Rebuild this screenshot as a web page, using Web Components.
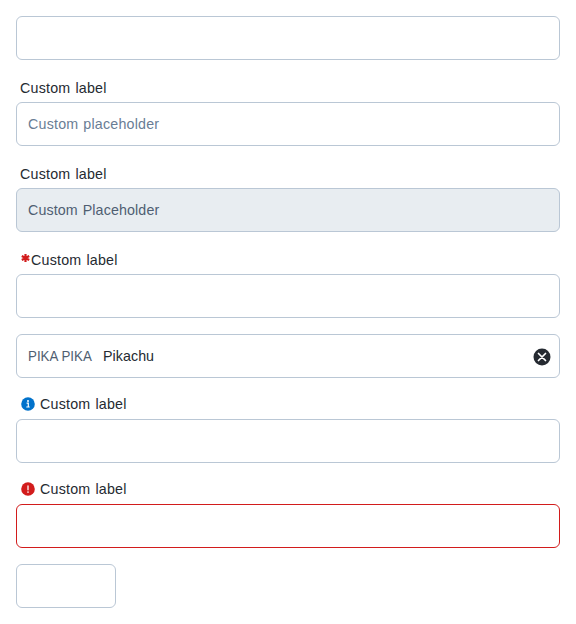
<!DOCTYPE html>
<html lang="en">
<head>
<meta charset="utf-8">
<title>Input fields</title>
<style>
body { margin: 0; padding: 16px; background: #fff; }
</style>
</head>
<body>
<field-list></field-list>
<script>
const ICONS = {
  info: `<svg viewBox="0 0 14 14" width="14" height="14"><circle cx="7" cy="7" r="6.8" fill="#0172cb"/><circle cx="7" cy="4.1" r="1" fill="#fff"/><path d="M5.6 6.2h1.7v3.7M5.3 10h3.4" fill="none" stroke="#fff" stroke-width="1.2"/></svg>`,
  error: `<svg viewBox="0 0 14 14" width="14" height="14"><circle cx="7" cy="7" r="6.8" fill="#d21c1c"/><path d="M7 4v3.8" stroke="#fff" stroke-opacity=".85" stroke-width="1.5" stroke-linecap="round"/><circle cx="7" cy="10.1" r=".9" fill="#fff" fill-opacity=".85"/></svg>`
};

class FieldList extends HTMLElement {
  constructor() {
    super();
    this.attachShadow({ mode: 'open' }).innerHTML = `
      <style>
        :host { display: flex; flex-direction: column; gap: 16px; }
        .clear { display: block; margin-top: 2px; }
      </style>
      <input-field></input-field>
      <input-field label="Custom label" placeholder="Custom placeholder"></input-field>
      <input-field label="Custom label" placeholder="Custom Placeholder" disabled></input-field>
      <input-field label="Custom label" required></input-field>
      <input-field value="Pikachu"><span slot="prefix">PIKA PIKA</span>
        <svg slot="suffix" class="clear" viewBox="0 0 18 18" width="18" height="18"><circle cx="9" cy="9" r="8.5" fill="#252a31"/><path d="M5.5 5.5l7 7M12.5 5.5l-7 7" stroke="#fff" stroke-width="1.7" stroke-linecap="round"/></svg>
      </input-field>
      <input-field label="Custom label" status="info"></input-field>
      <input-field label="Custom label" status="error"></input-field>
      <input-field style="width:100px"></input-field>`;
  }
}

class InputField extends HTMLElement {
  connectedCallback() {
    if (this.shadowRoot) return;
    const label = this.getAttribute('label');
    const status = this.getAttribute('status');
    const value = this.getAttribute('value');
    const text = value || this.getAttribute('placeholder') || '';
    this.attachShadow({ mode: 'open' }).innerHTML = `
      <style>
        :host { display: block; font: 15px/22px "Liberation Sans", Arial, sans-serif; color: #252a31; letter-spacing: .24px; word-spacing: .8px; }
        .label { display: flex; align-items: center; height: 22px; padding: 1px 4px 3px; }
        :host([status]) .label { height: 20px; padding: 0 4px 5px; }
        .name { transform: translateY(.3px) scaleX(.95); transform-origin: left; }
        .status { display: flex; margin: 0 5px 0 1px; }
        .star { display: block; overflow: visible; margin: 0 1px 4px 1px; }
        .box { box-sizing: border-box; height: 44px; border: 1px solid #bac7d5; border-radius: 6px; padding: 0 8px 0 11px; display: flex; align-items: center; background: #fff; }
        :host([status="error"]) .box { border-color: #d21c1c; }
        .text { flex: 1; color: #697d95; letter-spacing: .22px; transform: translateY(.3px) scaleX(.95); transform-origin: left; }
        .text.value { color: #252a31; letter-spacing: .06px; }
        :host([disabled]) .box { background: #e8edf1; }
        :host([disabled]) .text { color: #4f5e71; letter-spacing: .13px; }
        ::slotted([slot="prefix"]) { color: #4f5e71; margin-right: 3px; letter-spacing: 0; word-spacing: 0; transform: translateY(.3px) scaleX(.89); transform-origin: left; }
      </style>
      ${label ? `<div class="label">${status ? `<span class="status">${ICONS[status]}</span>` : ''}${this.hasAttribute('required') ? `<svg class="star" viewBox="0 0 9 8" width="9" height="8"><path d="M4.5 0v8M.8 2l7.4 4M8.2 2L.8 6" stroke="#d21c1c" stroke-width="2.2"/></svg>` : ''}<span class="name">${label}</span></div>` : ''}
      <div class="box"><slot name="prefix"></slot><span class="text${value ? ' value' : ''}">${text}</span><slot name="suffix"></slot></div>`;
  }
}
customElements.define('input-field', InputField);
customElements.define('field-list', FieldList);
</script>
</body>
</html>
